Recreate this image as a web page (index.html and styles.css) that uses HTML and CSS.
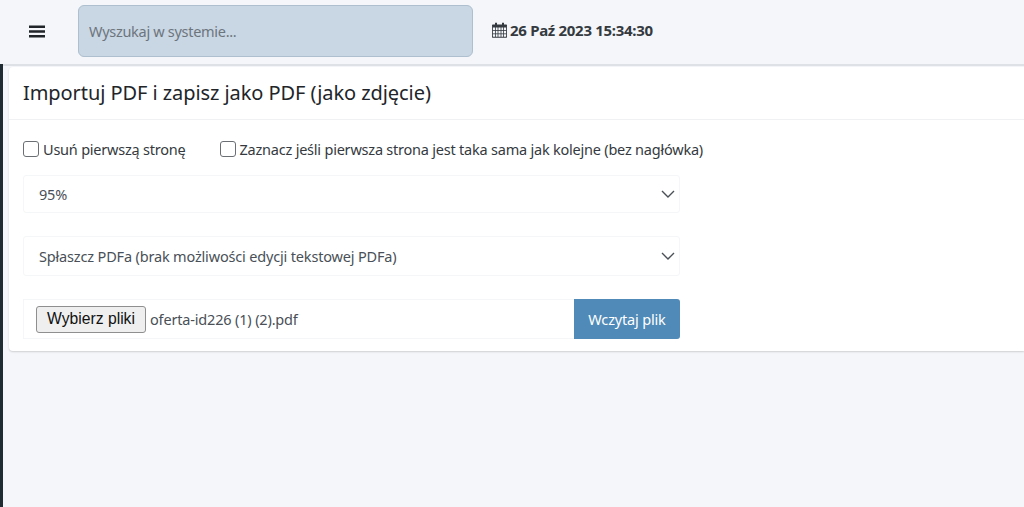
FILE: index.html
```html
<!DOCTYPE html>
<html lang="pl">
<head>
<meta charset="utf-8">
<title>Importuj PDF</title>
<link rel="stylesheet" href="styles.css">
</head>
<body>
<header class="topbar">
  <button class="burger" type="button" aria-label="Menu">
    <svg viewBox="0 0 16 13" width="16" height="13"><path d="M0 0.5h16v2.4H0zM0 5.300h16v2.400H0zM0 10.100h16v2.400H0z" fill="#212529"/></svg>
  </button>
  <input class="search" type="text" placeholder="Wyszukaj w systemie...">
  <div class="clock">
    <svg class="cal" viewBox="0 0 15 16" width="15" height="16"><path d="M1 3h13a.7.7 0 0 1 .7.7v10.600a1 1 0 0 1-1 1H1.300a1 1 0 0 1-1-1V3.700A.7.7 0 0 1 1 3z" fill="none" stroke="#343a40" stroke-width="1.100"/><path d="M.5 3h14v2.500H.5z" fill="#343a40"/><path d="M3 .7h2v3.500H3zM10 .7h2v3.500h-2z" fill="#343a40"/><path d="M.5 8.500h14M.5 11.800h14M3.500 5v10M6 5v10M9 5v10M11.500 5v10" stroke="#343a40" stroke-width=".8" fill="none"/></svg>
    <span>26 Paź 2023 15:34:30</span>
  </div>
</header>
<div class="shell">
  <aside class="rail"></aside>
  <main class="content">
    <section class="card">
      <h1 class="card-title">Importuj PDF i zapisz jako PDF (jako zdjęcie)</h1>
      <form class="card-body">
        <div class="checks">
          <label class="check"><span class="box"></span>Usuń pierwszą stronę</label>
          <label class="check"><span class="box"></span>Zaznacz jeśli pierwsza strona jest taka sama jak kolejne (bez nagłówka)</label>
        </div>
        <div class="select select-a"><span>95%</span><svg viewBox="0 0 14 8" width="14" height="8"><path d="M1 1l6 6 6-6" fill="none" stroke="#4a5056" stroke-width="1.400"/></svg></div>
        <div class="select select-b"><span>Spłaszcz PDFa (brak możliwości edycji tekstowej PDFa)</span><svg viewBox="0 0 14 8" width="14" height="8"><path d="M1 1l6 6 6-6" fill="none" stroke="#4a5056" stroke-width="1.400"/></svg></div>
        <div class="upload">
          <div class="file"><span class="file-btn">Wybierz pliki</span><span class="file-name">oferta-id226 (1) (2).pdf</span></div>
          <button class="submit" type="button">Wczytaj plik</button>
        </div>
      </form>
    </section>
  </main>
</div>
</body>
</html>
```
FILE: styles.css
```css
* { box-sizing: border-box; }
html, body { margin: 0; height: 507px; overflow: hidden; }
body { background: #f4f6f9; font-family: "Noto Sans", "Open Sans", sans-serif; color: #212529; }
.topbar { height: 66px; display: flex; align-items: center; background: #f4f6f9; border-bottom: 2px solid #dee2e6; padding: 1px 0 3px 29px; }
.burger { border: 0; padding: 0; background: none; width: 16px; height: 13px; display: flex; }
.search { width: 395px; height: 52px; margin-left: 33px; padding: 0 10px; background: #c9d6e3; border: 1px solid #aebfd0; border-radius: 6px; font: 14.5px "Noto Sans", sans-serif; letter-spacing: -.3px; }
.search::placeholder { color: #6c757d; opacity: 1; }
.clock { display: flex; align-items: center; gap: 3px; margin: 0 0 2px 19px; font-weight: 700; font-size: 15px; letter-spacing: -.3px; color: #343a40; }
.shell { display: flex; height: 441px; }
.rail { width: 3px; margin-top: -2px; background: #1f2d33; }
.content { flex: 1; padding: 1px 0 0 6px; min-width: 0; }
.card { background: #fff; border-radius: 4px 0 0 4px; box-shadow: 0 1px 2px rgba(0,0,0,.16); height: 284px; }
.card-title { margin: 0; height: 53px; padding: 0 14px 2px; display: flex; align-items: center; font-size: 20px; font-weight: 400; letter-spacing: -.07px; border-bottom: 1px solid #f0f1f2; }
.card-body { padding: 0 14px; width: 685px; }
.checks { display: flex; gap: 34px; height: 55px; padding-top: 20px; font-size: 14.5px; letter-spacing: -.22px; color: #343a40; white-space: nowrap; }
.check { display: flex; align-items: center; gap: 4px; height: 18px; }
.box { width: 16px; height: 16px; border: 1px solid #6b6f73; border-radius: 3px; background: #fff; }
.select { height: 38px; border: 1px solid #f5f6f7; border-radius: 3px; display: flex; align-items: center; justify-content: space-between; padding: 0 4px 0 15px; font-size: 14.5px; letter-spacing: -.17px; color: #495057; }
.select-b { margin-top: 23px; height: 40px; }
.upload { display: flex; margin-top: 23px; height: 40px; }
.file { flex: 1; display: flex; align-items: center; padding-left: 12px; border: 1px solid #f5f6f7; border-right: 0; }
.file-btn { width: 110px; height: 27px; display: flex; align-items: center; justify-content: center; background: #efefef; border: 1px solid #8f8f8f; border-radius: 3px; font: 15.7px "Liberation Sans", Arial, sans-serif; color: #111; }
.file-name { margin-left: 4px; font-size: 14.5px; letter-spacing: -.17px; color: #495057; }
.submit { width: 106px; border: 0; border-radius: 0 3px 3px 0; background: #4f8ab8; color: #fff; font: 14.5px "Noto Sans", sans-serif; letter-spacing: -.17px; }
```
